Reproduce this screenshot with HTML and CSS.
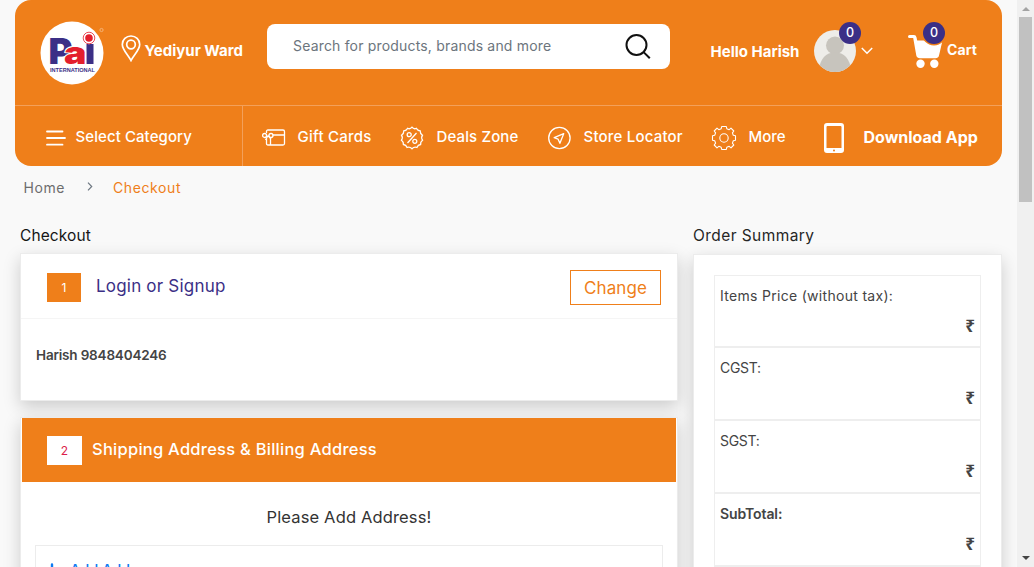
FILE: index.html
```html
<!DOCTYPE html>
<html lang="en">
<head>
<meta charset="utf-8">
<title>Checkout</title>
<link rel="stylesheet" href="styles.css">
</head>
<body>
<div class="window">
<div class="page">
  <header class="header">
    <div class="topbar">
      <svg class="logo" width="66" height="66" viewBox="0 0 66 66">
        <circle cx="32" cy="33" r="31.5" fill="#fff"/>
        <text class="logo-p" x="8.500" y="43.500" textLength="24" lengthAdjust="spacingAndGlyphs">P</text>
        <rect x="46.500" y="24" width="7" height="20" fill="#3b2f86"/>
        <text class="logo-a" x="24" y="44" textLength="22.500" lengthAdjust="spacingAndGlyphs">a</text>
        <circle cx="49" cy="18" r="5" fill="#e31e2d" stroke="#fff" stroke-width="2.4"/>
        <circle cx="49" cy="18" r="5.8" fill="none" stroke="#e31e2d" stroke-width=".8"/>
        <text class="logo-name" x="10" y="51.7" textLength="45" lengthAdjust="spacingAndGlyphs">INTERNATIONAL</text>
        <circle cx="61.5" cy="10" r="1.6" fill="none" stroke="#f6bd88" stroke-width=".8"/>
      </svg>
      <svg class="pin" width="20" height="27" viewBox="0 0 20 27" fill="none" stroke="#fff" stroke-width="1.7">
        <path d="M10 25.5C7.5 20 1.3 15 1.3 9.4a8.7 8.4 0 0 1 17.4 0C18.7 15 12.500 20 10 25.500z"/>
        <circle cx="10" cy="9.500" r="4.300"/>
      </svg>
      <span class="t strong ward">Yediyur Ward</span>
      <div class="search">
        <span class="t placeholder">Search for products, brands and more</span>
        <svg width="26" height="26" viewBox="0 0 26 26" fill="none" stroke="#111" stroke-width="2"><circle cx="11.500" cy="11" r="10"/><path d="M18.600 18.100l6.200 6.200"/></svg>
      </div>
      <span class="t strong hello">Hello Harish</span>
      <div class="badged avatar">
        <svg width="42" height="42" viewBox="0 0 42 42">
          <defs><clipPath id="face"><circle cx="21" cy="21" r="21"/></clipPath></defs>
          <g clip-path="url(#face)"><path fill="#eeede9" d="M0 0h42v42H0z"/><circle cx="21" cy="15.500" r="9" fill="#c7c4bd"/><path fill="#c7c4bd" d="M4.500 42C6 28 12 22.500 21 22.500S36 28 37.500 42z"/></g>
        </svg>
        <span class="t badge">0</span>
      </div>
      <svg class="down" width="12" height="8" viewBox="0 0 12 8" fill="none" stroke="#fff" stroke-width="1.500"><path d="M.8 1L6 6.300 11.200 1"/></svg>
      <div class="badged cart">
        <svg width="35" height="34" viewBox="0 0 35 34" fill="#fff"><path d="M1.500 0H6Q8 0 8.500 2.300L9.200 5.500H34.500L31 20.500Q30.400 23.300 27.500 23.300H12Q9 23.300 8.300 20.500L5.200 3H1.500Q0 3 0 1.500T1.500 0z"/><circle cx="12.500" cy="28.800" r="4.200"/><circle cx="26.300" cy="28.800" r="4.200"/></svg>
        <span class="t badge ringed">0</span>
      </div>
      <span class="t strong cart-label">Cart</span>
    </div>
    <nav class="nav">
      <div class="category">
        <svg width="20" height="16" viewBox="0 0 20 16" stroke="#fff" stroke-width="1.800" stroke-linecap="round"><path d="M1 1.500h15.500M1 8h18M1 14.700h15.500"/></svg>
        <span class="t category-label">Select Category</span>
      </div>
      <svg class="gift" width="24" height="18" viewBox="0 0 24 18" fill="none" stroke="#fff" stroke-width="1.300"><path d="M4.500 4V2.500Q4.500 1 6 1H21Q22.500 1 22.500 2.500V14.500Q22.500 16 21 16H6Q4.500 16 4.500 14.500V9M10.500 6H22.500M8.500 8v8M6 6.500L3.500 11M6 6.500L9 10"/><circle cx="2.600" cy="6.500" r="2"/><circle cx="9" cy="6.500" r="2"/></svg>
      <span class="t gift-label">Gift Cards</span>
      <svg width="24" height="24" viewBox="-12 -12 24 24" fill="none" stroke="#fff" stroke-width="1.300"><path d="M0-10.800Q1.800-8.500 4.300-9.700Q5.500-7.300 8.200-7.100Q8.100-4.300 10.500-2.800Q8.900-.5 10.500 2.200Q8.400 3.700 8.600 6.500Q5.900 6.900 4.900 9.500Q2.200 8.500 0 10.800Q-2.200 8.500-4.900 9.500Q-5.900 6.900-8.600 6.500Q-8.400 3.700-10.500 2.200Q-8.900-.5-10.500-2.800Q-8.100-4.300-8.200-7.100Q-5.500-7.300-4.300-9.700Q-1.800-8.500 0-10.800zM4.500-5L-4.500 5"/><circle cx="-2.800" cy="-3.300" r="2"/><circle cx="2.800" cy="3.300" r="2"/></svg>
      <span class="t deals-label">Deals Zone</span>
      <svg width="24" height="24" viewBox="0 0 24 24" fill="none" stroke="#fff" stroke-width="1.300"><circle cx="12.400" cy="12" r="10.700"/><path d="M16.700 7.700L7.200 11.700L11.100 13.200L12.900 17.300z" stroke-linejoin="round"/></svg>
      <span class="t store-label">Store Locator</span>
      <svg class="gear" width="26" height="26" viewBox="-13 -13 26 26" fill="none" stroke="#fff" stroke-width="1.100"><path d="M-2.300-11.500H2.300L2.800-9.300L5.200-8.300L7-9.800L9.800-7L8.400-5.100L9.300-2.800L11.500-2.300V2.300L9.300 2.800L8.400 5.100L9.800 7L7 9.800L5.200 8.300L2.800 9.300L2.300 11.500H-2.300L-2.800 9.300L-5.200 8.300L-7 9.800L-9.800 7L-8.400 5.100L-9.300 2.800L-11.500 2.300V-2.300L-9.300-2.800L-8.400-5.100L-9.800-7L-7-9.800L-5.200-8.300L-2.800-9.300z" stroke-linejoin="round"/><circle r="4.200"/></svg>
      <span class="t more-label">More</span>
      <svg class="phone" width="20" height="30" viewBox="0 0 20 30"><path fill="#fff" fill-rule="evenodd" d="M3 0H17Q20 0 20 3V27Q20 30 17 30H3Q0 30 0 27V3Q0 0 3 0zM2.500 4Q2.500 3 3.500 3H16.500Q17.500 3 17.500 4V25H2.500z"/><circle cx="10" cy="27.500" r="1" fill="#ef7f1a"/></svg>
      <span class="t strong app-label">Download App</span>
    </nav>
  </header>

  <div class="crumbs">
    <span class="t home">Home</span>
    <svg width="6" height="9" viewBox="0 0 6 9" fill="none" stroke="#6d7781" stroke-width="1.200"><path d="M1 .7l3.700 3.800L1 8.300"/></svg>
    <span class="t current">Checkout</span>
  </div>

  <div class="columns">
    <main>
      <h1 class="t title checkout-title">Checkout</h1>
      <section class="card login">
        <div class="card-head">
          <span class="t step">1</span>
          <span class="t login-label">Login or Signup</span>
          <button class="change"><span class="t change-label">Change</span></button>
        </div>
        <div class="user"><span class="t user-name">Harish 9848404246</span></div>
      </section>
      <section class="card shipping">
        <div class="card-head active">
          <span class="t step inverse">2</span>
          <span class="t shipping-label">Shipping Address &amp; Billing Address</span>
        </div>
        <p class="please"><span class="t please-label">Please Add Address!</span></p>
        <div class="add">
          <svg width="14" height="14" viewBox="0 0 14 14" stroke="#0d7bf2" stroke-width="2.400" stroke-linecap="round"><path d="M7 1.500v11M1.500 7h11"/></svg>
          <span class="t add-label">Add Address</span>
        </div>
      </section>
    </main>
    <aside>
      <h2 class="t title summary-title">Order Summary</h2>
      <section class="card summary">
        <div class="cell"><span class="t items-label">Items Price (without tax):</span><span class="rupee">₹</span></div>
        <div class="cell"><span class="t gst-label">CGST:</span><span class="rupee">₹</span></div>
        <div class="cell"><span class="t gst-label">SGST:</span><span class="rupee">₹</span></div>
        <div class="cell"><span class="t sub-label">SubTotal:</span><span class="rupee">₹</span></div>
        <div class="cell"></div>
      </section>
    </aside>
  </div>
</div>
<div class="scrollbar"><i class="arrow up"></i><i class="thumb"></i><i class="arrow dn"></i></div>
</div>
</body>
</html>
```
FILE: styles.css
```css
* { box-sizing: border-box; }
body { margin: 0; background: #f9f9f9; font-family: Inter, "Liberation Sans", sans-serif; color: #444; overflow: hidden; }
svg { display: block; flex: none; }
.window { display: flex; width: 1034px; height: 567px; overflow: hidden; }
.page { width: 1017px; height: 567px; overflow: hidden; }
.t { white-space: nowrap; justify-self: start; }
.strong { font-weight: 700; }

.header { margin: 0 15px; height: 166px; background: #ef7f1a; border-radius: 16px; color: #fff; }
.topbar { display: grid; grid-template-columns: 81px 24px 122px 444px 103px 48px 46px 39px 1fr; height: 105px; padding-left: 25px; align-items: start; }
.logo { margin-top: 20px; }
.logo-p { font: 900 36px Inter, sans-serif; fill: #3b2f86; }
.logo-a { font: 900 31px Inter, sans-serif; fill: #e31e2d; stroke: #fff; stroke-width: 2px; paint-order: stroke; }
.logo-name { font: 700 5.600px "Liberation Sans", sans-serif; fill: #3b2f86; }
.pin { margin: 35px 0 0 -.5px; }
.ward { font-size: 15px; line-height: 20px; margin: 41px 0 0 -.5px; }
.search { display: flex; align-items: center; justify-content: space-between; width: 403px; height: 45px; margin-top: 24px; padding: 0 19px 0 26px; background: #fff; border-radius: 8px; }
.placeholder { font-size: 14px; letter-spacing: .18px; color: #6c757d; margin-bottom: 2px; }
.hello { font-size: 15px; line-height: 20px; margin: 42px 0 0 -.5px; }
.badged { position: relative; }
.avatar { margin-top: 30px; }
.badge { position: absolute; left: 25px; top: -8px; width: 22px; height: 22px; border-radius: 50%; background: #3b2f86; color: #fff; font-size: 12.500px; font-weight: 500; line-height: 21px; text-align: center; }
.down { margin: 47px 0 0 -1px; }
.cart { margin-top: 35px; }
.ringed { left: 15px; top: -13px; box-shadow: 0 0 0 1.5px #ef7f1a; }
.cart-label { font-size: 14px; line-height: 20px; margin-top: 40px; letter-spacing: .1px; }

.nav { display: grid; grid-template-columns: 247px 36px 103px 36px 111px 36px 128px 37px 76px 39px 1fr; align-items: center; height: 61px; border-top: 1px solid #f3a05a; font-size: 15px; font-weight: 500; line-height: 20px; padding-top: 4px; }
.nav > svg { margin-left: -1px; }
.nav > .gift { margin-left: 0; }
.nav > .t { margin-bottom: 3px; margin-left: -.5px; }
.category { display: flex; align-items: center; gap: 9.500px; width: 228px; height: 60px; margin-top: -4px; padding: 4px 0 0 31px; border-right: 1px solid #f3a05a; }
.category .t { margin-bottom: 3px; }
.category-label { letter-spacing: .08px; }
.gift-label { letter-spacing: .25px; }
.deals-label { letter-spacing: .13px; }
.store-label { letter-spacing: .2px; }
.app-label { font-size: 16px; }

.crumbs { display: grid; grid-template-columns: 63px 26.500px 1fr; align-items: center; height: 43px; padding-left: 23.500px; font-size: 14px; letter-spacing: .6px; color: #6d6d6d; }
.crumbs svg { margin-bottom: 2px; }
.current { color: #ef7f1a; }

.columns { display: grid; grid-template-columns: 658px 309px; column-gap: 15px; padding-left: 20px; margin-top: 16px; }
.title { width: max-content; margin: 0 0 18px; font-size: 15.500px; font-weight: 400; line-height: 22px; height: 10px; color: #262626; }
.checkout-title { color: #161616; letter-spacing: .1px; }
.summary-title { letter-spacing: .43px; margin-bottom: 19px; }
.card { background: #fff; border: 1px solid #ececec; box-shadow: 0 6px 16px rgba(0,0,0,.18); }
.login { height: 148px; }
.card-head { display: flex; align-items: center; height: 65px; padding: 2px 16px 0 26px; border-bottom: 1px solid #f5f5f5; }
.step { width: 34px; height: 29px; background: #ef7f1a; color: #fff; font-size: 12px; line-height: 29px; text-align: center; margin-right: 15px; }
.login-label { font-size: 17px; letter-spacing: .2px; color: #3b2f86; margin-bottom: 2px; }
.change { width: 91px; height: 35px; margin-left: auto; padding: 2px 0 0; background: #fff; border: 1px solid #ef7f1a; color: #ef7f1a; font: 17px Inter, sans-serif; letter-spacing: .1px; }
.user { padding: 26px 0 0 15px; font-size: 13.500px; letter-spacing: -.18px; font-weight: 600; line-height: 20px; }
.shipping { height: 300px; margin-top: 16px; }
.active { height: 64px; margin: 0 1px; padding: 0 0 0 25px; background: #ef7f1a; border: 0; color: #fff; }
.inverse { width: 35px; background: #fff; color: #dc1e4b; margin-right: 10px; }
.shipping-label { font-size: 16.500px; font-weight: 500; letter-spacing: .25px; margin-bottom: 2px; }
.please { margin: 25px 0 17px; text-align: center; font-size: 16.500px; letter-spacing: .15px; line-height: 21px; color: #333; }
.add { display: flex; gap: 11px; height: 100px; margin: 0 14px; padding: 14px 9px; border: 1px solid #ececec; color: #0d7bf2; font-size: 14.500px; font-weight: 500; line-height: 20px; }
.add svg { margin-top: 3px; }
.summary { height: 400px; padding: 20px; }
.cell { display: flex; flex-direction: column; justify-content: space-between; height: 73px; padding: 10px 5px 12px; border: 1px solid #eee; font-size: 14px; line-height: 20px; box-shadow: 0 1px #eee; }
.cell:first-child { height: 72px; padding-bottom: 11px; }
.items-label { letter-spacing: .3px; }
.gst-label { letter-spacing: -.3px; }
.sub-label { font-weight: 600; letter-spacing: -.1px; }
.rupee { align-self: flex-end; font: 700 17px/18px "Noto Sans", sans-serif; }

.scrollbar { display: flex; flex-direction: column; align-items: center; width: 17px; height: 567px; background: #f0f0f0; }
.thumb { width: 13px; height: 185px; background: #c1c1c1; margin: 6px 0 auto; }
.arrow { border: 4px solid transparent; width: 8px; }
.up { margin-top: 3px; border-bottom-color: #a3a3a3; }
.dn { margin-bottom: 3px; border-top-color: #444; }
```
